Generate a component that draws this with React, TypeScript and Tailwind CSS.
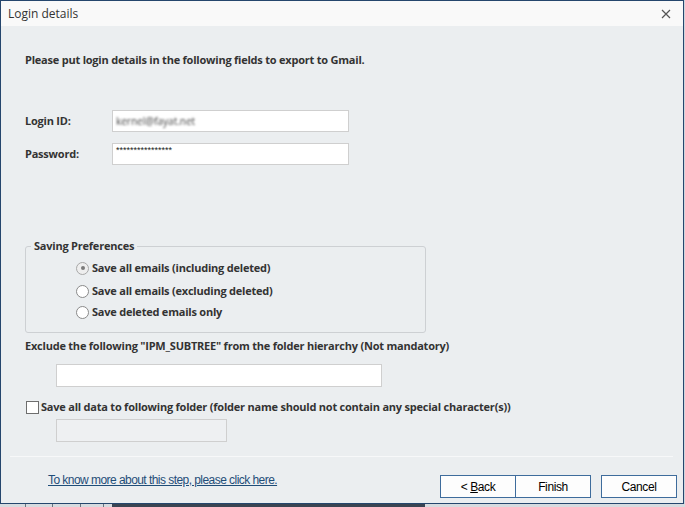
import React from "react";

const ui = { fontFamily: '"Open Sans", "Noto Sans", "Liberation Sans", sans-serif' };
const ms = { fontFamily: '"Liberation Sans", Arial, sans-serif' };

function Radio({ checked, label, className }: { checked?: boolean; label: string; className?: string }) {
  return (
    <div className={"flex h-[20px] items-center " + (className ?? "")}>
      <span
        className={
          "flex h-[13px] w-[13px] items-center justify-center rounded-full border " +
          (checked ? "border-[#a8a8a8] bg-[#eeeeee]" : "border-[#8a8a8a] bg-white")
        }
      >
        {checked && <span className="h-[4px] w-[4px] rounded-full bg-[#7a7a7a]" />}
      </span>
      <span className="ml-[3px] text-[11px] font-bold tracking-[-0.22px] text-[#333]">{label}</span>
    </div>
  );
}

export default function App() {
  return (
    <div className="relative h-[507px] w-[685px] overflow-hidden bg-[#cfd5dc]" style={ui}>
      <div className="flex h-[504px] w-[684px] flex-col border border-[#25466d] bg-[#ebeef0]">
        {/* title bar */}
        <div className="flex h-[25px] shrink-0 items-center justify-between bg-[#f9f9f9] pl-[7px] pr-[12px]">
          <span className="text-[12px] text-[#333]">Login details</span>
          <svg width="10" height="10" viewBox="0 0 10 10">
            <path d="M1 1 L9 9 M9 1 L1 9" stroke="#555" strokeWidth="1.2" />
          </svg>
        </div>

        {/* body */}
        <div className="flex flex-1 flex-col text-[#333]">
          <div className="ml-[24px] mt-[26px] h-[16px] text-[11px] font-bold leading-[16px] tracking-[-0.22px]">
            Please put login details in the following fields to export to Gmail.
          </div>

          <div className="ml-[24px] mt-[42px] flex h-[22px] items-center">
            <span className="w-[87px] text-[11px] font-bold tracking-[-0.22px]">Login ID:</span>
            <div className="flex h-[22px] w-[237px] items-center border border-[#cfcfcf] bg-white pl-[3px]">
              <span className="text-[10px] text-[#444] blur-[1.3px]">kernel@fayat.net</span>
            </div>
          </div>

          <div className="ml-[24px] mt-[11px] flex h-[22px] items-center">
            <span className="w-[87px] text-[11px] font-bold tracking-[-0.22px]">Password:</span>
            <div className="flex h-[22px] w-[237px] items-start border border-[#cfcfcf] bg-white pl-[3px] pt-[1px]">
              <span className="text-[9px] leading-[10px] text-[#222]" style={ms}>
                ****************
              </span>
            </div>
          </div>

          <fieldset className="ml-[24px] mt-[74px] box-border h-[94px] w-[401px] rounded-[3px] border border-[#cdd0d3]">
            <legend className="ml-[5px] px-[3px] text-[11px] font-bold leading-[14px] tracking-[-0.22px]">
              Saving Preferences
            </legend>
            <div className="pl-[50px]">
              <Radio checked label="Save all emails (including deleted)" className="mt-[5px]" />
              <Radio label="Save all emails (excluding deleted)" className="mt-[3px]" />
              <Radio label="Save deleted emails only" className="mt-[1px]" />
            </div>
          </fieldset>

          <div className="ml-[24px] mt-[5px] h-[16px] text-[11px] font-bold leading-[16px] tracking-[-0.22px]">
            Exclude the following "IPM_SUBTREE" from the folder hierarchy (Not mandatory)
          </div>

          <div className="ml-[55px] mt-[10px] h-[23px] w-[326px] border border-[#cfcfcf] bg-white" />

          <div className="ml-[25px] mt-[12px] flex h-[16px] items-center">
            <span className="h-[13px] w-[13px] border border-[#6e6e6e] bg-white" />
            <span className="ml-[2px] text-[11px] font-bold leading-[16px] tracking-[-0.22px]">
              Save all data to following folder (folder name should not contain any special character(s))
            </span>
          </div>

          <div className="ml-[55px] mt-[4px] h-[23px] w-[171px] border border-[#cfcfcf] bg-[#eef0f2]" />

          <div className="ml-[9px] mt-[14px] h-px w-[663px] bg-[#f7f8f9]" />

          {/* footer */}
          <div className="mt-[18px] flex items-start" style={ms}>
            <a className="ml-[47px] mt-[-2px] text-[12px] leading-[14px] tracking-[-0.55px] text-[#1f4d78] underline">
              To know more about this step, please click here.
            </a>
            <div className="flex-1" />
            <div className="flex">
              <button className="h-[23px] w-[76px] border border-[#3e6c9c] bg-[#fdfdfd] text-[12px] tracking-[-0.4px] text-black">
                &lt; <span className="underline">B</span>ack
              </button>
              <button className="h-[23px] w-[75px] border border-l-0 border-[#3e6c9c] bg-[#fdfdfd] text-[12px] tracking-[-0.4px] text-black">
                Finish
              </button>
              <button className="ml-[10px] mr-[6px] h-[23px] w-[76px] border border-[#3e6c9c] bg-[#fdfdfd] text-[12px] tracking-[-0.4px] text-black">
                Cancel
              </button>
            </div>
          </div>
        </div>
      </div>
      {/* app behind */}
      <div className="flex h-[3px] w-full bg-[#d7dbdf]">
        <div className="ml-[25px] h-full w-px bg-[#6b7580]" />
        <div className="ml-[26px] h-full w-px bg-[#6b7580]" />
        <div className="ml-[27px] h-full w-px bg-[#6b7580]" />
        <div className="ml-[22px] h-full w-px bg-[#6b7580]" />
        <div className="ml-[8px] h-full w-[313px] bg-[#3a4452]" />
      </div>
    </div>
  );
}
